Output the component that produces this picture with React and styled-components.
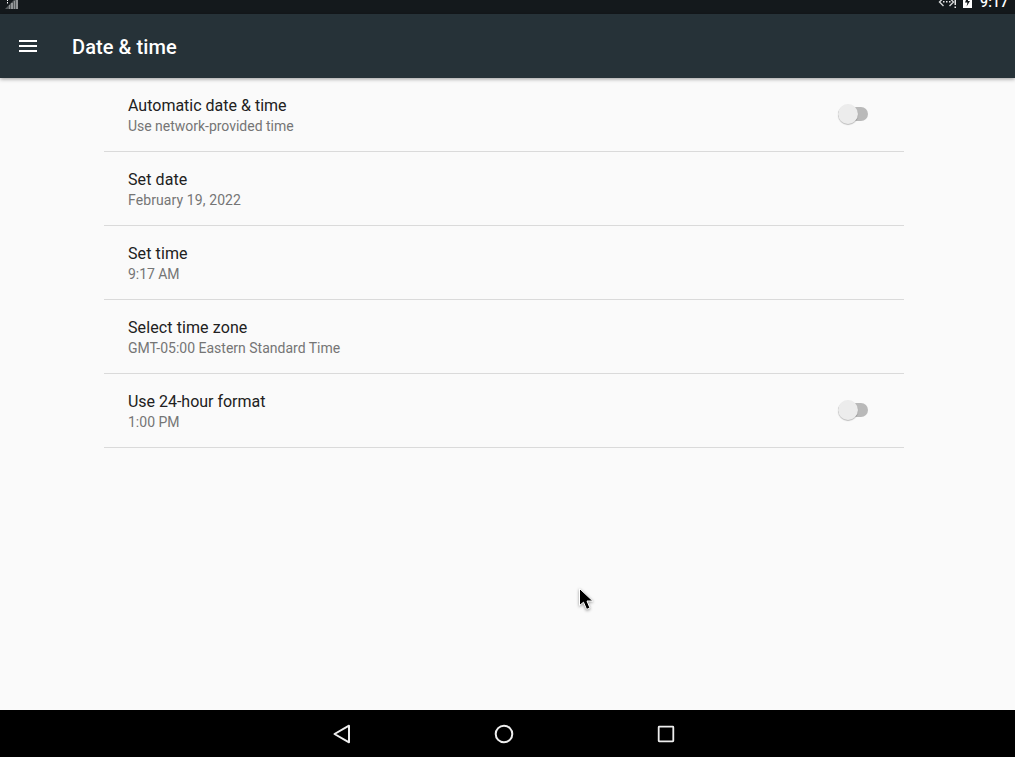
import React from "react";
import styled, { createGlobalStyle } from "styled-components";

const GlobalStyle = createGlobalStyle`
  * { box-sizing: border-box; }
  body {
    margin: 0;
    overflow: hidden;
    font-family: Roboto, "Liberation Sans", sans-serif;
  }
`;

const Screen = styled.div`
  position: relative;
  display: flex;
  flex-direction: column;
  width: 1015px;
  height: 757px;
  overflow: hidden;
  background: #fafafa;
`;

const StatusBar = styled.div`
  flex: none;
  display: flex;
  justify-content: space-between;
  height: 14px;
  padding: 0 7px 0 5px;
  overflow: hidden;
  background: #14191c;
`;

const StatusIcons = styled.div`
  display: flex;
  align-items: flex-start;
  height: 14px;
`;

const StatusIcon = styled.svg`
  flex: none;
  display: block;
  margin-right: ${(p) => p.$gap || 0}px;
`;

const Clock = styled.span`
  width: 28px;
  margin-top: -6px;
  font-size: 14px;
  font-weight: 500;
  line-height: 16px;
  letter-spacing: 0.2px;
  white-space: nowrap;
  color: #fff;
`;

const AppBar = styled.header`
  flex: none;
  position: relative;
  display: flex;
  align-items: center;
  gap: 32px;
  height: 64px;
  padding: 0 16px;
  background: #263238;
  box-shadow: 0 1px 4px rgba(0, 0, 0, 0.4);
`;

const MenuButton = styled.button`
  display: flex;
  width: 24px;
  height: 24px;
  padding: 0;
  border: 0;
  background: none;
`;

const Title = styled.h1`
  margin: 2px 0 0;
  font-size: 20px;
  font-weight: 500;
  line-height: 24px;
  letter-spacing: 0.08px;
  color: #fff;
`;

const List = styled.main`
  flex: 1;
  width: 800px;
  margin-left: 104px;
`;

const Row = styled.div`
  display: flex;
  align-items: flex-start;
  justify-content: space-between;
  height: 74px;
  padding: 17px 32px 0 24px;
  border-bottom: 1px solid #dadada;
`;

const Label = styled.div`
  font-size: 16px;
  line-height: 22px;
  letter-spacing: ${(p) => p.$tracking || 0}px;
  color: #212121;
`;

const Summary = styled.div`
  font-size: 14px;
  line-height: 19px;
  letter-spacing: ${(p) => p.$tracking || 0}px;
  color: #757575;
`;

const Switch = styled.div`
  display: flex;
  align-items: center;
  width: 30px;
  height: 14px;
  margin: 12px 4px 0 0;
  border-radius: 7px;
  background: #b9b9b9;
`;

const Thumb = styled.div`
  flex: none;
  width: 20px;
  height: 20px;
  border-radius: 50%;
  background: #ececec;
  box-shadow: 0 1px 1px rgba(0, 0, 0, 0.25);
`;

const NavBar = styled.nav`
  flex: none;
  display: flex;
  justify-content: center;
  gap: 138px;
  height: 47px;
  padding: 12px 7px 0 0;
  background: #000;
`;

const Pointer = styled.svg`
  position: absolute;
  left: 575px;
  top: 585px;
  filter: drop-shadow(0 1px 1.5px rgba(0, 0, 0, 0.4));
`;

const settings = [
  { label: "Automatic date & time", summary: "Use network-provided time", summaryTracking: -0.02, toggle: true },
  { label: "Set date", labelTracking: 0.1, summary: "February 19, 2022", summaryTracking: 0.1 },
  { label: "Set time", labelTracking: 0.1, summary: "9:17 AM", summaryTracking: -0.05 },
  { label: "Select time zone", labelTracking: 0.1, summary: "GMT-05:00 Eastern Standard Time" },
  { label: "Use 24-hour format", labelTracking: -0.02, summary: "1:00 PM", toggle: true },
];

export default function App() {
  return (
    <>
      <GlobalStyle />
      <Screen>
        <StatusBar>
          <StatusIcon width="14" height="14" viewBox="0 0 14 14">
            <path d="M0 9L9 0H13V9Z" fill="#555a5c" />
            <path d="M4 5h1v4H4zM6 3h2v6H6zM9 1h1v8H9zM11 0h2v9h-2z" fill="#929597" />
            <path d="M2 0h1v1H2zM2 2h1v1.5H2z" fill="#fff" />
          </StatusIcon>
          <StatusIcons>
            <StatusIcon $gap={6} width="19" height="14" viewBox="0 0 19 14">
              <path d="M5.5-2L1.5 2l4 4M11.5-2l4 4-4 4" fill="none" stroke="#d5d6d7" strokeWidth="1.4" />
              <path d="M5 1h1.5v1.5H5zM8 1h1.5v1.5H8zM11 1h1.5v1.5H11zM16.5 0H18v5h-1.5zM16.5 6.5H18V8h-1.5z" fill="#e8e8e8" />
            </StatusIcon>
            <StatusIcon $gap={8} width="9" height="14" viewBox="0 0 9 14">
              <path d="M0 0H9V8H0Z" fill="#fff" />
              <path d="M3 0L2 2.4h2.4L3.6 6.5L7 1H5V0Z" fill="#14191c" />
            </StatusIcon>
            <Clock>9:17</Clock>
          </StatusIcons>
        </StatusBar>
        <AppBar>
          <MenuButton aria-label="Menu">
            <svg width="24" height="24" viewBox="0 0 24 24">
              <path d="M3 6h18v2H3zM3 11h18v2H3zM3 16h18v2H3z" fill="#fff" />
            </svg>
          </MenuButton>
          <Title>Date &amp; time</Title>
        </AppBar>
        <List>
          {settings.map((s) => (
            <Row key={s.label}>
              <div>
                <Label $tracking={s.labelTracking}>{s.label}</Label>
                <Summary $tracking={s.summaryTracking}>{s.summary}</Summary>
              </div>
              {s.toggle && (
                <Switch role="switch" aria-checked="false">
                  <Thumb />
                </Switch>
              )}
            </Row>
          ))}
        </List>
        <NavBar>
          <svg width="24" height="24" viewBox="0 0 24 24" fill="none" stroke="#eee" strokeWidth="2">
            <path d="M19 3.7V20.3L4.5 12Z" strokeLinejoin="round" />
          </svg>
          <svg width="24" height="24" viewBox="0 0 24 24" fill="none" stroke="#eee" strokeWidth="2">
            <circle cx="12" cy="12" r="8.3" />
          </svg>
          <svg width="24" height="24" viewBox="0 0 24 24" fill="none" stroke="#eee" strokeWidth="1.8">
            <rect x="4.7" y="4.7" width="14.6" height="14.6" rx="0.5" />
          </svg>
        </NavBar>
        <Pointer width="24" height="30" viewBox="0 0 24 30">
          <path d="M4.5 3.5V20.5L8.5 17.2L11.6 24.4L15 23L12 16H17.8Z" fill="#000" stroke="#fff" strokeWidth="1" />
        </Pointer>
      </Screen>
    </>
  );
}
